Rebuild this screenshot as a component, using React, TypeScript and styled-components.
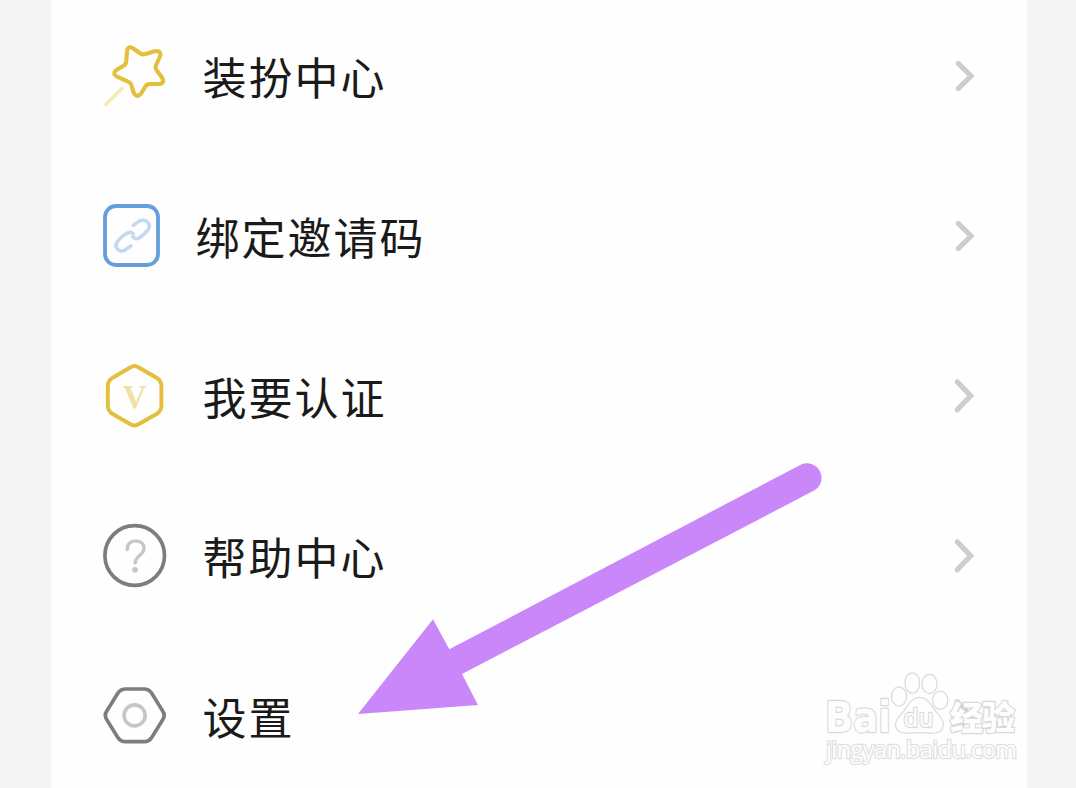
import React, { ReactNode } from "react";
import styled, { createGlobalStyle } from "styled-components";

const GlobalStyle = createGlobalStyle`
  html,
  body {
    margin: 0;
    overflow: hidden;
    background: #f5f5f5;
  }
`;

const StarIcon = () => (
  <Icon viewBox="0 0 72 72">
    <path d="M7 64.5 23 48.5" stroke="#f5e9b5" strokeWidth="3.8" />
    <path
      d="M28 12Q28.3 5.2 34 8.3L41 13.2Q43.5 15 46.5 14L55.5 11.3Q62.8 10.3 61 16.5L57 25.3Q55.9 27.6 57.4 30L63.3 38Q66.2 43.3 60 43.9L50.5 44Q47.5 44.2 46.2 46.8L42 53.7Q38 58.4 34.8 53L32.3 45Q31.6 42.6 29 41.6L18 36.7Q13 34 17 30.3L24.6 25.7Q27 24.2 27.2 21.5Z"
      stroke="#e3bf3c"
      strokeWidth="4.1"
    />
  </Icon>
);

const LinkIcon = () => (
  <Icon viewBox="0 0 72 72">
    <rect x="6" y="6" width="53" height="59" rx="11" stroke="#649fdb" strokeWidth="3.8" />
    <g stroke="#c3d8f1" strokeWidth="3.6">
      <path d="M34.3 25.3 39.5 21.6C46 17.5 53.5 24 49 29.8C47 32.8 43 36.2 40.2 37.9C37.6 39.3 35.2 38.7 33.7 36.7" />
      <path d="M34.3 33.6C32.4 32 29.6 32.1 27.3 33.6C24 35.8 20.3 39 18.2 41.9C14.5 47.5 20.5 53.4 26.3 49.9L31.7 46" />
    </g>
  </Icon>
);

const VerifyIcon = () => (
  <Icon viewBox="0 0 72 72">
    <path
      d="M31.5 7.3Q35.5 4.8 39.5 7.3L57.5 17.7Q62.4 20.6 62.4 26V46Q62.4 51 57.5 54L39.5 64.3Q35.5 66.6 31.5 64.3L13.7 54Q8.8 51 8.8 46V26Q8.8 20.6 13.7 17.7Z"
      stroke="#e3bf3c"
      strokeWidth="3.9"
    />
    <BadgeLetter x="35.6" y="47.5" fill="#f2e1a6">
      V
    </BadgeLetter>
  </Icon>
);

const HelpIcon = () => (
  <Icon viewBox="0 0 72 72">
    <circle cx="35.7" cy="35.5" r="29.8" stroke="#7d7d7d" strokeWidth="3.7" />
    <path
      d="M28.2 29.6C28.2 24 31.5 20.9 36.6 20.9C41.7 20.9 45 24 45 28.6C45 34.8 36.2 36 36.2 43"
      stroke="#c6c6c6"
      strokeWidth="3.4"
    />
    <circle cx="36" cy="49.8" r="2.9" fill="#c6c6c6" />
  </Icon>
);

const SettingsIcon = () => (
  <Icon viewBox="0 0 72 72">
    <path
      d="M26.5 9H45Q50 9 52.9 13.5L63.6 30.9Q66.8 35.4 63.6 39.9L52.9 57.2Q50 61.7 45 61.7H26.5Q21.5 61.7 18.6 57.2L7.9 39.9Q4.7 35.4 7.9 30.9L18.6 13.5Q21.5 9 26.5 9Z"
      stroke="#7d7d7d"
      strokeWidth="3.7"
    />
    <circle cx="35.6" cy="35.4" r="10.5" stroke="#c6c6c6" strokeWidth="3.6" />
  </Icon>
);

const Chevron = ({ large }: { large?: boolean }) => (
  <ChevronSvg viewBox="0 0 24 36">
    {large ? (
      <path d="M4.2 3.8 17.6 17.8 4.2 31.8" />
    ) : (
      <path d="M5.4 5.5 18 18 5.4 30.5" />
    )}
  </ChevronSvg>
);

const Watermark = () => (
  <WatermarkSvg viewBox="0 0 200 104">
    <Wordmark x="5" y="67" textLength="66" lengthAdjust="spacingAndGlyphs">
      Bai
    </Wordmark>
    <path d="M99.5 33C106 33 109 38 112.5 43C116.5 49 123 53 122.8 60C122.3 66.5 116.5 68 110.5 67.6C103 66.7 96 66.7 88.5 67.6C82 68 76.5 66 76.2 60C76 53 82.5 50 86 44C89 39 93 33 99.5 33Z" />
    <ellipse cx="79" cy="31.5" rx="7" ry="9" />
    <ellipse cx="92.3" cy="18" rx="6.8" ry="9.5" />
    <ellipse cx="109.5" cy="19" rx="7" ry="9" />
    <ellipse cx="120.2" cy="35.3" rx="7" ry="8.5" />
    <InnerMark x="83.5" y="62" textLength="30" lengthAdjust="spacingAndGlyphs">
      du
    </InnerMark>
    <Product x="130" y="65" textLength="65">
      经验
    </Product>
    <UrlText x="6" y="93" textLength="191">
      jingyan.baidu.com
    </UrlText>
  </WatermarkSvg>
);

interface MenuItem {
  label: string;
  icon: ReactNode;
  compact?: boolean;
  largeChevron?: boolean;
}

const items: MenuItem[] = [
  { label: "装扮中心", icon: <StarIcon /> },
  { label: "绑定邀请码", icon: <LinkIcon />, compact: true },
  { label: "我要认证", icon: <VerifyIcon />, largeChevron: true },
  { label: "帮助中心", icon: <HelpIcon />, largeChevron: true },
  { label: "设置", icon: <SettingsIcon />, largeChevron: true },
];

const App: React.FC = () => (
  <Page>
    <GlobalStyle />
    <Card>
      {items.map(({ label, icon, compact, largeChevron }) => (
        <Row key={label}>
          {icon}
          <Label $compact={compact}>{label}</Label>
          <Chevron large={largeChevron} />
        </Row>
      ))}
    </Card>
    <Arrow viewBox="0 0 470 256">
      <path d="M2 256 77 161.3 93.3 191.3 445.2 6.4A14.6 14.6 0 0 1 458 32.6L106 216 122 247Z" />
    </Arrow>
    <Watermark />
  </Page>
);

export default App;

const Page = styled.main`
  position: relative;
  display: flex;
  width: 1076px;
  height: 788px;
  padding: 0 49px 0 51px;
  box-sizing: border-box;
  overflow: hidden;
  background: #f5f5f5;
  font-family: "Liberation Sans", "Noto Sans CJK SC", sans-serif;
`;

const Card = styled.ul`
  flex: 1;
  margin: 0;
  padding: 0;
  list-style: none;
  background: #fefefe;
`;

const Row = styled.li`
  display: flex;
  align-items: center;
  height: 160px;
  padding: 0 50px 0 48px;
  box-sizing: border-box;

  &:first-child {
    height: 152px;
    margin-bottom: 4px;
  }
`;

const Icon = styled.svg`
  flex: none;
  width: 72px;
  height: 72px;
  fill: none;
  stroke-linecap: round;
  stroke-linejoin: round;
`;

const BadgeLetter = styled.text`
  font: 700 33px "Liberation Serif", serif;
  text-anchor: middle;
`;

const Label = styled.span<{ $compact?: boolean }>`
  flex: 1;
  margin-left: ${({ $compact }) => ($compact ? 24.5 : 31.5)}px;
  padding-bottom: 1px;
  font-family: "Noto Sans CJK SC", sans-serif;
  font-size: 44px;
  line-height: 64px;
  letter-spacing: 2px;
  white-space: nowrap;
  color: #1a1a1a;
`;

const ChevronSvg = styled.svg`
  flex: none;
  width: 24px;
  height: 36px;
  fill: none;
  stroke: #cdcdcd;
  stroke-width: 5.2;
  stroke-linecap: round;
`;

const Arrow = styled.svg`
  position: absolute;
  left: 356px;
  top: 458px;
  width: 470px;
  height: 256px;
  fill: #c987f9;
`;

const WatermarkSvg = styled.svg`
  position: absolute;
  left: 820px;
  top: 665px;
  width: 200px;
  height: 104px;
  fill: #fefefe;
  stroke: #d9d9d9;
  stroke-width: 2.4;
  stroke-linejoin: round;
  paint-order: stroke;
`;

const Wordmark = styled.text`
  font: 700 43px "DejaVu Sans", sans-serif;
`;

const InnerMark = styled.text`
  font: 400 25px "DejaVu Sans", sans-serif;
`;

const Product = styled.text`
  font: 900 33px "Noto Sans CJK SC", sans-serif;
`;

const UrlText = styled.text`
  font: 400 23.5px "Open Sans", sans-serif;
  stroke: #e0e0e0;
`;
